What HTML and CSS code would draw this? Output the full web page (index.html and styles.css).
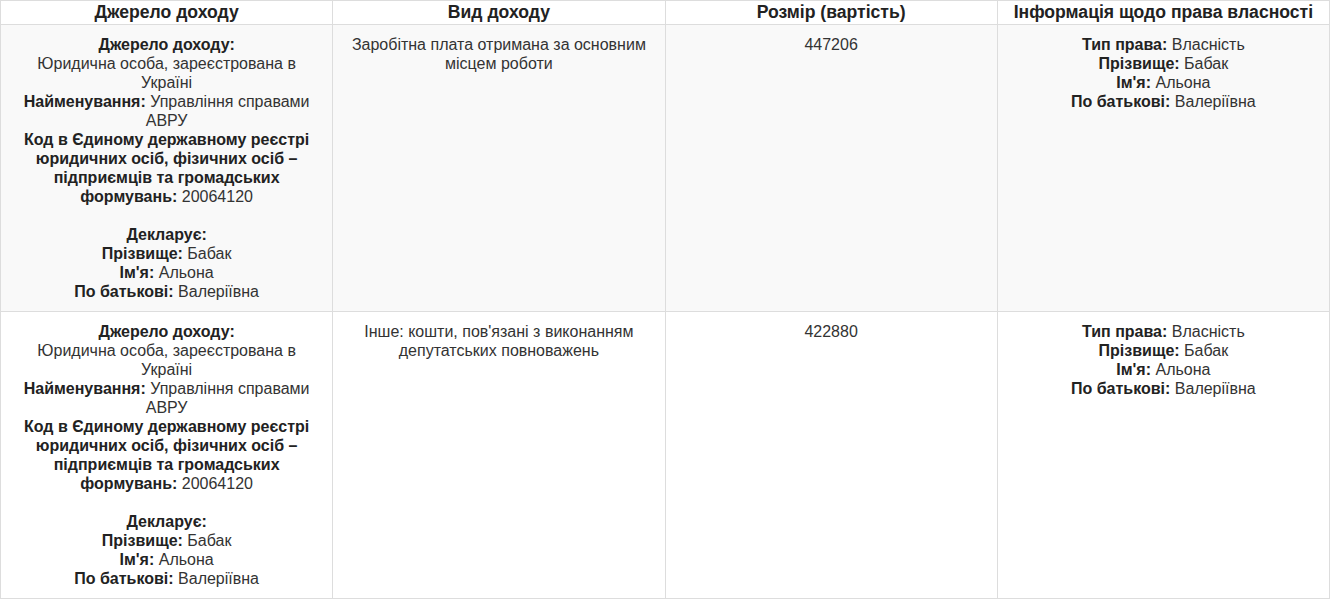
FILE: index.html
```html
<!DOCTYPE html>
<html lang="uk">
  <head>
    <meta charset="UTF-8" />
    <meta name="viewport" content="width=device-width, initial-scale=1.0" />
    <title>Доходи</title>
    <link rel="stylesheet" href="styles.css">
  </head>
  <body>
    <table class="income">
      <thead>
        <tr>
          <th>Джерело доходу</th>
          <th>Вид доходу</th>
          <th>Розмір (вартість)</th>
          <th>Інформація щодо права власності</th>
        </tr>
      </thead>
      <tbody>
        <tr>
          <td>
            <b>Джерело доходу:</b><br>
            Юридична особа, зареєстрована в Україні<br>
            <b>Найменування:</b> Управління справами АВРУ<br>
            <b>Код в Єдиному державному реєстрі юридичних осіб, фізичних осіб – підприємців та громадських формувань:</b> 20064120<br>
            <br>
            <b>Декларує:</b><br>
            <b>Прізвище:</b> Бабак<br>
            <b>Ім'я:</b> Альона<br>
            <b>По батькові:</b> Валеріївна
          </td>
          <td>Заробітна плата отримана за основним місцем роботи</td>
          <td>447206</td>
          <td>
            <b>Тип права:</b> Власність<br>
            <b>Прізвище:</b> Бабак<br>
            <b>Ім'я:</b> Альона<br>
            <b>По батькові:</b> Валеріївна
          </td>
        </tr>
        <tr>
          <td>
            <b>Джерело доходу:</b><br>
            Юридична особа, зареєстрована в Україні<br>
            <b>Найменування:</b> Управління справами АВРУ<br>
            <b>Код в Єдиному державному реєстрі юридичних осіб, фізичних осіб – підприємців та громадських формувань:</b> 20064120<br>
            <br>
            <b>Декларує:</b><br>
            <b>Прізвище:</b> Бабак<br>
            <b>Ім'я:</b> Альона<br>
            <b>По батькові:</b> Валеріївна
          </td>
          <td>Інше: кошти, пов'язані з виконанням депутатських повноважень</td>
          <td>422880</td>
          <td>
            <b>Тип права:</b> Власність<br>
            <b>Прізвище:</b> Бабак<br>
            <b>Ім'я:</b> Альона<br>
            <b>По батькові:</b> Валеріївна
          </td>
        </tr>
      </tbody>
    </table>
  </body>
</html>
```

FILE: styles.css
```css
body {
  margin: 0;
  background: #fff;
  color: #333;
  font-family: "Liberation Sans", Arial, sans-serif;
  font-size: 16px;
  line-height: 19px;
}
.income {
  width: 1330px;
  border-collapse: collapse;
  table-layout: fixed;
}
.income th,
.income td {
  border: 1px solid #ddd;
  text-align: center;
  vertical-align: top;
}
.income th {
  padding: 2px 5px;
  font-size: 17.6px;
  font-weight: bold;
  color: #222;
}
.income td {
  padding: 10px;
}
.income tbody tr:nth-child(odd) {
  background: #f9f9f9;
}
.income b {
  color: #222;
}
```
